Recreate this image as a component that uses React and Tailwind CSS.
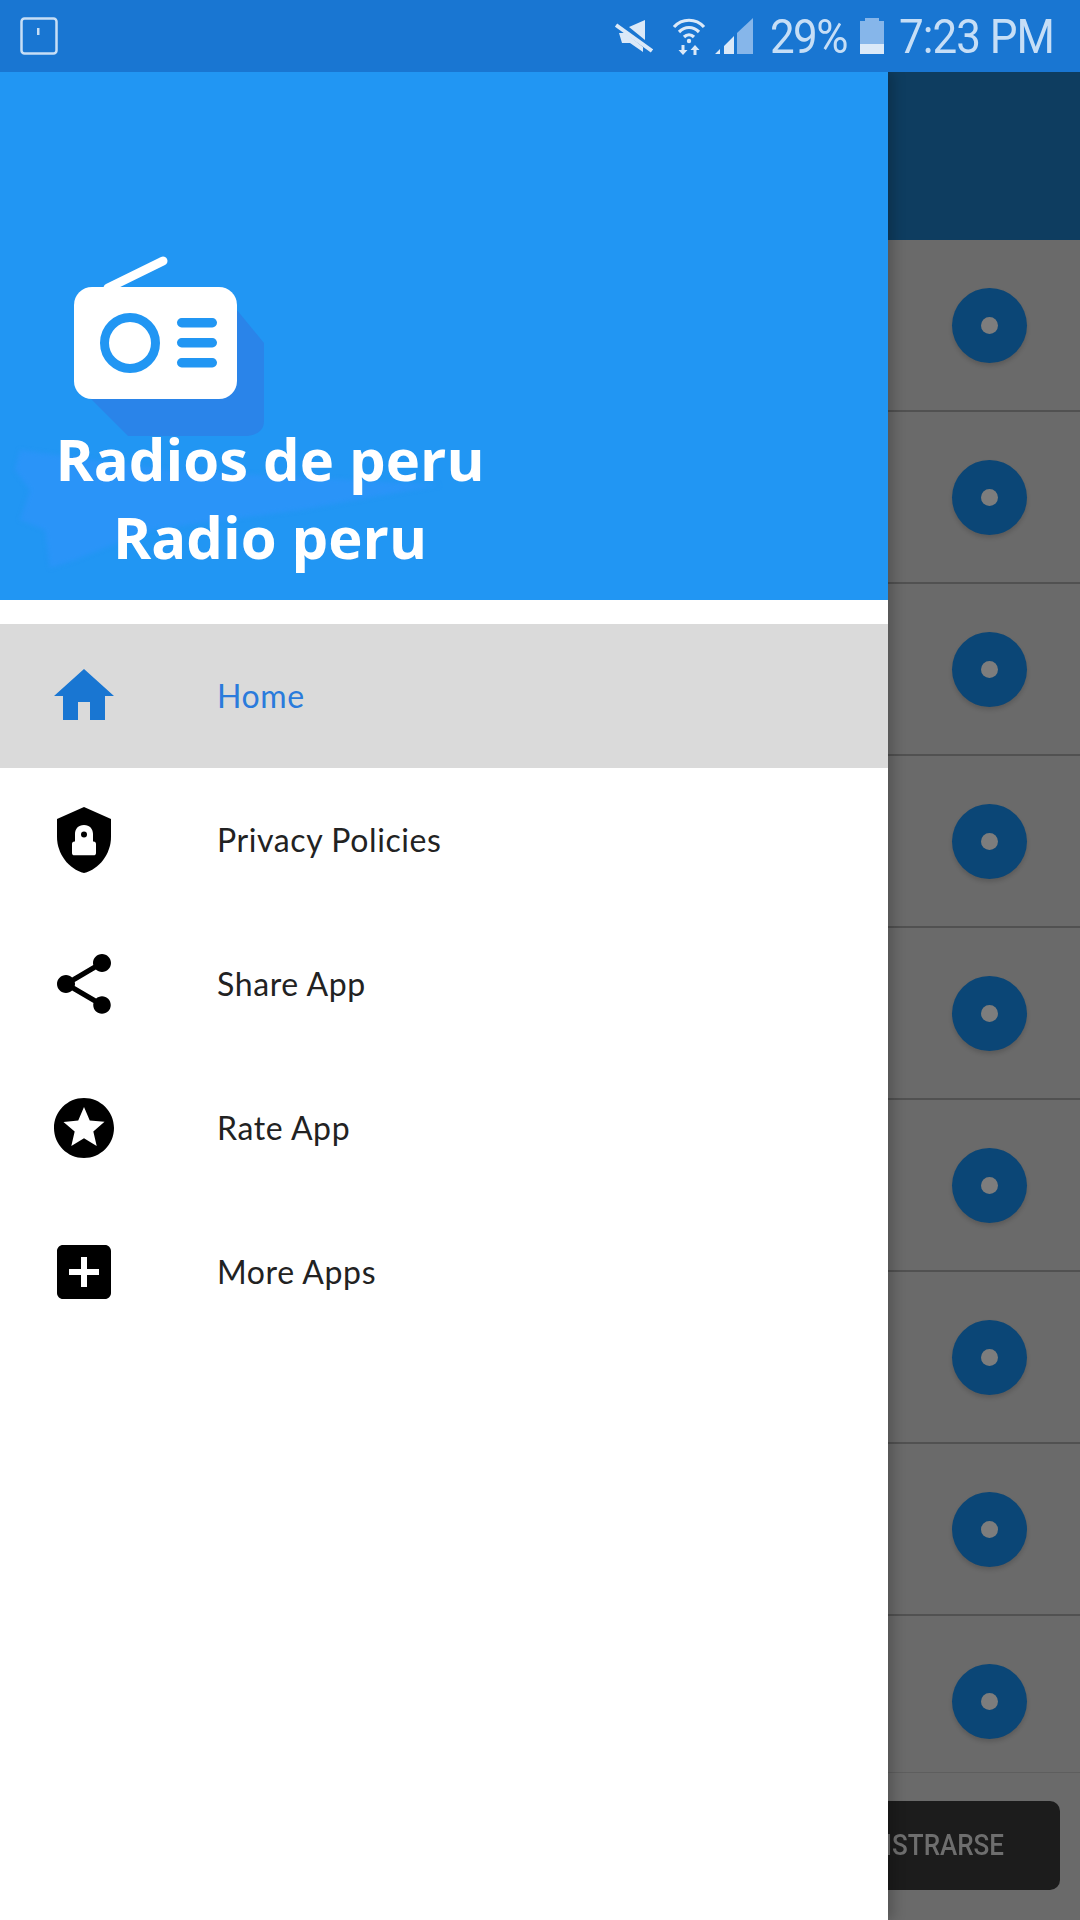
const Icon = ({ d }) => (
  <svg viewBox="0 0 24 24" className="w-[72px] h-[72px] fill-current">
    <path d={d} />
  </svg>
);

const ShieldIcon = () => (
  <svg viewBox="0 0 24 24" className="w-[72px] h-[72px]">
    <path fill="#000" d="M12 1L3 5v6c0 5.55 3.84 10.74 9 12 5.16-1.26 9-6.45 9-12V5l-9-4z" />
    <path fill="#fff" d="M12 7c-1.9 0-3 1.3-3 3v2.500h-.2c-.5 0-.8.3-.8.8v3c0 .5.3.8.8.8h6.400c.5 0 .8-.3.8-.8v-3c0-.5-.3-.8-.8-.8H15V10c0-1.700-1.100-3-3-3z" />
    <circle cx="12" cy="10.200" r="1" fill="#000" />
  </svg>
);

const menu = [
  { label: 'Home', active: true, d: 'M10 20v-6h4v6h5v-8h3L12 3 2 12h3v8z' },
  { label: 'Privacy Policies', shield: true },
  { label: 'Share App', d: 'M18 16.08c-.76 0-1.44.3-1.96.77L8.91 12.7c.05-.23.09-.46.09-.7s-.04-.47-.09-.7l7.05-4.11c.54.5 1.25.81 2.04.81 1.66 0 3-1.34 3-3s-1.34-3-3-3-3 1.34-3 3c0 .24.04.47.09.7L8.04 9.81C7.5 9.31 6.79 9 6 9c-1.66 0-3 1.34-3 3s1.34 3 3 3c.79 0 1.5-.31 2.04-.81l7.12 4.16c-.05.21-.08.43-.08.65 0 1.61 1.31 2.92 2.92 2.92s2.92-1.31 2.92-2.92-1.31-2.92-2.92-2.92z' },
  { label: 'Rate App', d: 'M11.99 2C6.47 2 2 6.48 2 12s4.47 10 9.99 10C17.52 22 22 17.52 22 12S17.52 2 11.99 2zm4.24 16L12 15.45 7.77 18l1.12-4.81-3.73-3.23 4.92-.42L12 5l1.92 4.53 4.92.42-3.73 3.23L16.23 18z' },
  { label: 'More Apps', d: 'M19 3H5c-1.11 0-2 .9-2 2v14c0 1.1.89 2 2 2h14c1.1 0 2-.9 2-2V5c0-1.1-.9-2-2-2zm-2 10h-4v4h-2v-4H7v-2h4V7h2v4h4v2z' },
];

function StatusBar() {
  return (
    <div className="relative z-20 h-[72px] bg-[#1976d2] flex items-center pl-[20px] pr-[26px] text-[#c6def6] font-['Roboto',sans-serif]">
      <svg viewBox="0 0 38 38" className="w-[38px] h-[38px]">
        <rect x="1.500" y="1.500" width="35" height="35" rx="3" fill="none" stroke="#c6def6" strokeWidth="2.500" />
        <rect x="17" y="11" width="2.500" height="7" fill="#c6def6" />
      </svg>
      <div className="ml-auto flex items-center">
        <svg viewBox="0 0 38 36" className="w-[38px] h-[36px]">
          <path fill="#dbe9f8" d="M14 9L30 2v20zM4 15h6l18 14v5L15 25H7z" />
          <path stroke="#dbe9f8" strokeWidth="4" d="M1 7l36 26" />
        </svg>
        <svg viewBox="0 0 36 38" className="w-[36px] h-[38px] ml-[18px]">
          <g fill="none" stroke="#dbe9f8" strokeWidth="3.200">
            <path d="M3 10C11 1 25 1 33 10" />
            <path d="M8 15c6-6 14-6 20 0" />
            <path d="M13 20c3-3 7-3 10 0" />
          </g>
          <circle cx="18" cy="24" r="2.200" fill="#dbe9f8" />
          <path fill="#dbe9f8" d="M10.500 28h3v5H16.500l-4.500 5-4.500-5h3zM22.500 38h3v-5h3l-4.500-5-4.500 5h3z" />
        </svg>
        <svg viewBox="0 0 38 36" className="w-[38px] h-[36px] ml-[8px]">
          <path fill="#86b6ea" d="M38 0v36H22V15z" />
          <path fill="#dbe9f8" d="M0 36l5-5v5zM9 36v-8l10-10v18z" />
        </svg>
        <span className="ml-[17px] inline-block scale-y-110 text-[44px] leading-none tracking-[-1.5px]">29%</span>
        <div className="ml-[13px] w-[24px] h-[36px] flex flex-col items-center">
          <div className="w-[14px] h-[3px] bg-[#86b6ea]" />
          <div className="w-full flex-1 bg-[#86b6ea] flex items-end">
            <div className="w-full h-[10px] bg-[#dbe9f8]" />
          </div>
        </div>
        <span className="ml-[15px] inline-block scale-y-110 text-[44px] leading-none tracking-[-1px]">7:23 PM</span>
      </div>
    </div>
  );
}

function DrawerHeader() {
  return (
    <div className="relative h-[528px] bg-[#2196f3]">
      <svg viewBox="0 0 888 528" className="absolute left-0 top-0 w-[888px] h-[528px]">
        {/* faint wave behind the title */}
        <path className="blur-[2px]" fill="#2a94f8" d="M20 378l150 20 270 15-140 25-150 20-75 30-25 8-5-38-25-10 10-30-15-20z" />
        {/* long shadow */}
        <path fill="#2a84e9" d="M232 232l32 39v78c0 10-8 15-20 15H128l-40-40z" />
        {/* antenna */}
        <path stroke="#fff" strokeWidth="9" strokeLinecap="round" d="M108 216L163 189" />
        {/* radio body */}
        <rect x="74" y="215" width="163" height="112" rx="18" fill="#fff" />
        <circle cx="130" cy="271" r="25.500" fill="none" stroke="#2196f3" strokeWidth="9" />
        <rect x="177" y="246" width="40" height="9.500" rx="4.700" fill="#2196f3" />
        <rect x="177" y="266" width="40" height="9.500" rx="4.700" fill="#2196f3" />
        <rect x="177" y="286" width="40" height="9.500" rx="4.700" fill="#2196f3" />
      </svg>
      <div className="relative w-[540px] pt-[348px] text-center text-white font-bold font-['Open_Sans',sans-serif] text-[58px] leading-[78px] whitespace-nowrap">
        <div>Radios de peru</div>
        <div>Radio peru</div>
      </div>
    </div>
  );
}

function Drawer() {
  return (
    <div className="relative z-10 w-[888px] shrink-0 bg-white shadow-[5px_0_12px_rgba(0,0,0,0.22)]">
      <DrawerHeader />
      <div className="pt-[24px]">
        {menu.map((item) => (
          <div
            key={item.label}
            className={`h-[144px] flex items-center pl-[48px] ${item.active ? 'bg-[#dadada] text-[#1976d2]' : 'text-black'}`}
          >
            {item.shield ? <ShieldIcon /> : <Icon d={item.d} />}
            <span className={`ml-[97px] font-['Lato',sans-serif] text-[32px] tracking-[0.6px] leading-none ${item.active ? 'text-[#2a7bdc]' : 'text-[#222]'}`}>
              {item.label}
            </span>
          </div>
        ))}
      </div>
    </div>
  );
}

function Station() {
  return (
    <div className="w-[75px] h-[75px] rounded-full bg-[#0b4676] shadow-[0_3px_4px_rgba(0,0,0,0.15)] flex items-center justify-center">
      <div className="w-[17px] h-[17px] rounded-full bg-[#7d7d7d]" />
    </div>
  );
}

function StationList() {
  const rows = [1, 2, 3, 4, 5, 6, 7, 8];
  return (
    <div className="flex-1 min-w-0 flex flex-col bg-[#6a6a6a] overflow-hidden">
      <div className="h-[168px] shrink-0 bg-[#0e3d60]" />
      {rows.map((n) => (
        <div key={n} className="h-[172px] shrink-0 flex items-center pl-[64px] border-b-2 border-[#515151]">
          <Station />
        </div>
      ))}
      {/* last row is cut off by the bottom bar */}
      <div className="h-[156px] shrink-0 pt-[48px] pl-[64px]">
        <Station />
      </div>
      <div className="flex-1 flex justify-end pt-[28px] pr-[20px] border-t border-[#5e5e5e]">
        <div className="w-[280px] h-[89px] shrink-0 rounded-[10px] bg-[#1c1c1c] flex items-center justify-center font-['Roboto',sans-serif] font-medium text-[26px] text-[#6e6e6e]">
          <span className="inline-block scale-y-110">REGISTRARSE</span>
        </div>
      </div>
    </div>
  );
}

export default function App() {
  return (
    <div className="w-[1080px] h-[1920px] flex flex-col overflow-hidden bg-white">
      <StatusBar />
      <div className="flex-1 flex min-h-0">
        <Drawer />
        <StationList />
      </div>
    </div>
  );
}
